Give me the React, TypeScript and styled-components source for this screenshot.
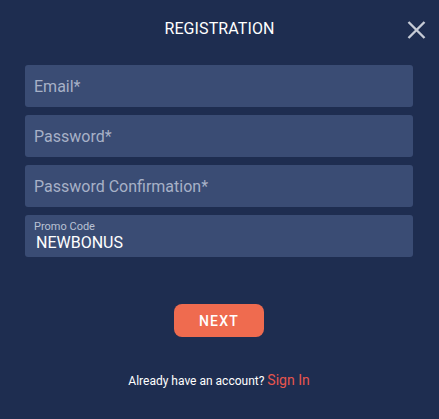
import React from "react";
import styled, { createGlobalStyle } from "styled-components";

const Global = createGlobalStyle`
  html, body { margin: 0; padding: 0; background: #1e2d50; }
  body { font-family: Roboto, "Liberation Sans", Arial, sans-serif; }
  * { box-sizing: border-box; }
`;

const Modal = styled.div`
  width: 439px;
  height: 419px;
  background: #1e2d50;
  padding: 0 26px 0 25px;
  display: flex;
  flex-direction: column;
`;

const Header = styled.div`
  height: 56px;
  display: grid;
  grid-template-columns: 1fr auto 1fr;
  align-items: center;
  margin: 0 -26px 0 -25px;
  padding: 0 14px;
`;

const Title = styled.h1`
  grid-column: 2;
  margin: 0;
  font-size: 16px;
  font-weight: 400;
  color: #ffffff;
  letter-spacing: 0.1px;
  padding-top: 1px;
`;

const Close = styled.button`
  grid-column: 3;
  justify-self: end;
  background: none;
  border: none;
  padding: 0;
  width: 22px;
  height: 22px;
  display: flex;
  align-items: center;
  justify-content: center;
  margin: 4px -2px 0 0;
  cursor: pointer;
`;

const Form = styled.form`
  margin-top: 9px;
  display: flex;
  flex-direction: column;
  gap: 8px;
`;

const Field = styled.label`
  height: 42px;
  border-radius: 3px;
  background: #3a4c74;
  display: flex;
  flex-direction: column;
  justify-content: center;
  padding: 0 9px;
`;

const Input = styled.input<{ $filled?: boolean }>`
  border: none;
  outline: none;
  background: transparent;
  padding: 0;
  margin: 0;
  font-family: Roboto, "Liberation Sans", Arial, sans-serif;
  font-size: 16px;
  color: #ffffff;
  height: ${(p) => (p.$filled ? "19px" : "20px")};
  padding-left: ${(p) => (p.$filled ? "2px" : "0")};
  &::placeholder { color: #a7b1c7; }
`;

const SmallLabel = styled.span`
  font-size: 11px;
  color: #b9c2d4;
  line-height: 12px;
  margin-top: 1px;
`;

const Actions = styled.div`
  display: flex;
  flex-direction: column;
  align-items: center;
  margin-top: 47px;
`;

const NextButton = styled.button`
  width: 90px;
  height: 33px;
  border: none;
  border-radius: 8px;
  background: #ef6b4f;
  color: #ffffff;
  font-family: Roboto, "Liberation Sans", Arial, sans-serif;
  font-size: 14px;
  font-weight: 500;
  letter-spacing: 1.2px;
  padding: 1px 0 0;
  cursor: pointer;
`;

const Footer = styled.p`
  margin: 35px 0 0;
  font-size: 12px;
  color: #ffffff;
  line-height: 16px;
`;

const SignIn = styled.a`
  color: #e8554d;
  font-size: 14px;
  text-decoration: none;
  margin-left: 3px;
`;

export default function App() {
  return (
    <>
      <Global />
      <Modal>
        <Header>
          <Title>REGISTRATION</Title>
          <Close aria-label="Close">
            <svg width="19" height="18" viewBox="0 0 19 18">
              <path d="M1.5 1 L17.5 17 M17.5 1 L1.5 17" stroke="#c6cbd6" strokeWidth="2.4" strokeLinecap="butt" />
            </svg>
          </Close>
        </Header>
        <Form onSubmit={(e) => e.preventDefault()}>
          <Field>
            <Input placeholder="Email*" />
          </Field>
          <Field>
            <Input placeholder="Password*" type="password" />
          </Field>
          <Field>
            <Input placeholder="Password Confirmation*" type="password" />
          </Field>
          <Field>
            <SmallLabel>Promo Code</SmallLabel>
            <Input $filled defaultValue="NEWBONUS" />
          </Field>
        </Form>
        <Actions>
          <NextButton>NEXT</NextButton>
          <Footer>
            Already have an account?<SignIn href="#">Sign In</SignIn>
          </Footer>
        </Actions>
      </Modal>
    </>
  );
}
